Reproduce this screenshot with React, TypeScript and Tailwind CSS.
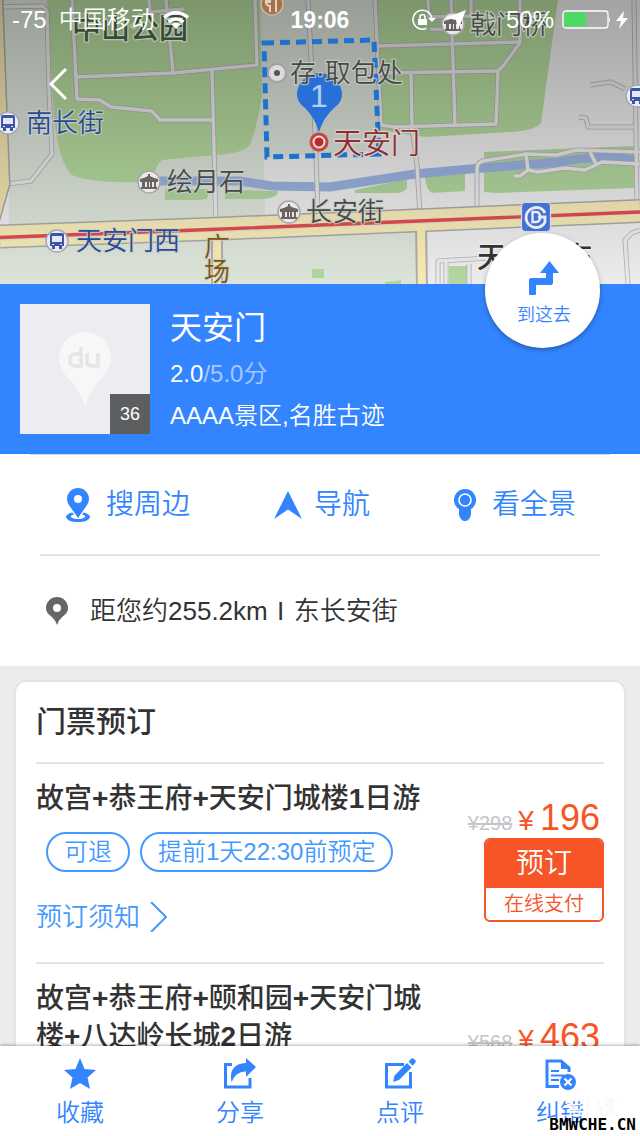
import React from "react";

const roads = [
  "M0 7 L43 6 L47 11 L49 90 L52 154 L31 181 L8 184",
  "M72 0 L77 99 L100 100 L111 107 L152 111 L160 120 L213 120",
  "M75 77 L173 73 L257 65 L255 0",
  "M149 0 L150 12 L184 9 M166 0 L173 73",
  "M212 70 L216 226",
  "M308 0 L315 130 L318 212",
  "M375 0 L381 125 L395 127 L496 124 L498 71 L503 66 L520 43 L520 0",
  "M378 46 L520 42",
  "M380 73 L498 71",
  "M411 72 L412 128 L417 165 L420 215",
  "M428 0 L429 18 M451 0 L455 124 M471 0 L471 18 M428 17 L471 16 M430 29 L452 30",
  "M477 208 L477 170 Q477 162 483 161 L526 154 L557 155 L576 150 L640 152",
  "M526 154 L528 170 L538 172 L565 168 L585 170 L602 162 L640 164 M528 170 L520 176 L514 176 M590 152 L596 164",
  "M634 0 L637 205",
  "M590 85 L611 82 L625 89 M579 117 L586 118 L588 127 L634 127",
  "M640 230 L632 233 L625 240 L628 284",
  "M438 284 L438 261 L490 258 M446 261 L446 284 M469 264 L469 284",
];

const shrubs = [
  "M165 189 H208 V197 Q206 200 200 200 H165 Z",
  "M225 190 L278 191 Q278 198 262 199 H225 Z",
  "M355 190 L407 179 V188 Q404 193 395 193 H355 Z",
  "M425 177 L465 174 V191 L432 193 Q426 190 425 177 Z",
  "M449 266 H467 V284 H449 Z",
  "M312 269 H324 V278 H312 Z",
  "M385 282 L401 280 V284 H385 Z",
];

function MuseumMark({ x, y }: { x: number; y: number }) {
  return (
    <g transform={`translate(${x} ${y})`}>
      <circle r="11" fill="#e9e9e9" stroke="#a6a6a6" strokeWidth="1.5" />
      <path d="M-1-8 H1 V-6 Q4-4 9-3 V0 H-9 V-3 Q-4-4-1-6 Z M-7 0 H-4 V5 H-7 Z M-2 0 H0 V5 H-2 Z M1 0 H3 V5 H1 Z M5 0 H7 V5 H5 Z M-8 5 H8 V7 H-8 Z" fill="#6b6262" />
    </g>
  );
}

function BusMark({ x, y }: { x: number; y: number }) {
  return (
    <g transform={`translate(${x} ${y})`}>
      <circle r="11" fill="#ececf4" stroke="#a3a8b8" strokeWidth="1.5" />
      <path d="M-5-8 H5 Q7-8 7-6 V5 H5 V8 H2 V5 H-2 V8 H-5 V5 H-7 V-6 Q-7-8-5-8 Z" fill="#3c55a5" />
      <path d="M-5-5 H5 V1 H-5 Z M-5 3 H-3 V4 H-5 Z M3 3 H5 V4 H3 Z" fill="#e6e8f4" />
    </g>
  );
}

function MapView() {
  return (
    <svg viewBox="0 0 640 284" preserveAspectRatio="xMidYMid slice" className="block h-[284px] w-full" role="img" aria-label="地图">
      <defs>
        <linearGradient id="shade" x1="0" y1="0" x2="0" y2="1">
          <stop offset="0" stopColor="#000" stopOpacity="0.32" />
          <stop offset="1" stopColor="#000" stopOpacity="0.01" />
        </linearGradient>
      </defs>
      <rect width="640" height="284" fill="#efefef" />
      <path d="M0 0 H262 L265 225 L0 228 Z M262 0 H372 L380 150 L264 158 Z M0 236 L418 228 V284 H0 Z" fill="#dfe7dc" />
      <path d="M0 205 L9 188 L9 228 H0 Z" fill="#efefef" />
      <path d="M47 0 H260 L262 95 Q257 128 250 145 Q242 153 225 154 L162 160 Q156 164 152 182 Q88 184 70 174 Q55 152 53 100 Z" fill="#b7dc9f" />
      <path d="M374 0 H558 L541 123 Q534 131 510 132 L425 137 L381 130 Z" fill="#b7dc9f" />
      <path d="M484 152 L634 146 V188 L495 193 L484 192 Z" fill="#b4d9a0" />
      {shrubs.map((d) => (
        <path key={d} d={d} fill="#b4d9a0" />
      ))}
      <path d="M160 181 H240 L272 186 L330 187 L415 174 L470 169 L560 162 Q598 154 636 160" fill="none" stroke="#9bb4e2" strokeWidth="9" />
      <g fill="none" strokeLinejoin="round">
        {roads.map((d) => (
          <path key={d} d={d} stroke="#b4b4b4" strokeWidth="5" />
        ))}
        {roads.map((d) => (
          <path key={d} d={d} stroke="#ececee" strokeWidth="3.4" />
        ))}
        <path d="M-3 0 L4 184 L-8 226" stroke="#a9a9a9" strokeWidth="13" />
        <path d="M-3 0 L4 184 L-8 226" stroke="#f3e6b0" strokeWidth="10" />
        <path d="M217 232 V290 M421 222 L422 290" stroke="#b0b0b0" strokeWidth="12" />
        <path d="M0 236.500 L210 229 L640 211" stroke="#ababab" strokeWidth="24" />
        <path d="M0 236.500 L210 229 L640 211" stroke="#f8ecbb" strokeWidth="21" />
        <path d="M217 232 V290 M421 222 L422 290" stroke="#fbedb5" strokeWidth="8" />
        <path d="M0 238 L210 230 L640 212" stroke="#e8e3cd" strokeWidth="5" />
        <path d="M0 237.500 L210 229.500 L640 212" stroke="#e44d4d" strokeWidth="3.400" />
      </g>
      <rect width="640" height="284" fill="url(#shade)" />
      <path d="M264 43 L374 40 L379 154 L267 157 Z" fill="none" stroke="#1c72cf" strokeWidth="5" strokeDasharray="10 6" />
      <circle cx="272" cy="4" r="11" fill="#a8714a" stroke="#c3b5aa" strokeWidth="1.500" />
      <path d="M266-4 V3 Q267 6 270 6 V12 M268-4 V3 M270-4 V3 M276-4 V12" fill="none" stroke="#ddd2c8" strokeWidth="2" />
      <MuseumMark x={149} y={182} />
      <MuseumMark x={289} y={212} />
      <MuseumMark x={453} y={24} />
      <BusMark x={8} y={123} />
      <BusMark x={57} y={241} />
      <BusMark x={637} y={96} />
      <circle cx="277" cy="73" r="9" fill="#dcdcdc" stroke="#a0a0a0" strokeWidth="2" />
      <circle cx="277" cy="73" r="3" fill="#555" />
      <path d="M319 132 Q315 118 305 108 Q297 102 297 95 A22.500 22 0 0 1 342 95 Q342 102 334 108 Q323 118 319 132 Z" fill="#296fd8" />
      <circle cx="319" cy="142" r="9.500" fill="#c84444" />
      <circle cx="319" cy="142" r="5.500" fill="#b72d2d" stroke="#eedddd" strokeWidth="2" />
      <text x="319" y="107" textAnchor="middle" fill="#b5cdf2" className="text-[32px] font-light">1</text>
      <g strokeWidth="2.500" strokeLinejoin="round" style={{ paintOrder: "stroke" }}>
        <g stroke="#c9d0c8" strokeOpacity="0.75" className="text-[26px] font-[350]">
          <g fill="#484848">
            <text x="290" y="82">存·取包处</text>
            <text x="167" y="191">绘月石</text>
            <text x="306" y="221">长安街</text>
            <text x="470" y="34">戟门桥</text>
          </g>
          <g fill="#2a4a95">
            <text x="26" y="132">南长街</text>
            <text x="76" y="250">天安门西</text>
          </g>
          <g fill="#7a5410">
            <text x="204" y="256">广</text>
            <text x="204" y="281">场</text>
          </g>
        </g>
        <text x="72" y="39" fill="#374a35" stroke="#b4c3ad" className="text-[29px] font-medium">中山公园</text>
        <text x="333" y="154" fill="#8b2f2f" stroke="#d8d0d0" className="text-[29px] font-[350]">天安门</text>
        <text x="477" y="268" fill="#333" stroke="#eeeeee" className="text-[29px] font-medium">天安门东</text>
      </g>
      <g transform="translate(536 217)">
        <rect x="-14.500" y="-14.500" width="29" height="29" rx="4" fill="#4570d2" stroke="#d6dbe8" strokeWidth="1.200" />
        <path d="M9-4 A10 10 0 1 0 9 5 V0 H2" fill="none" stroke="#e6ebf6" strokeWidth="2.800" />
        <path d="M-3.500-5 H0 Q4-5 4-1 V1 Q4 5 0 5 H-3.500 Z" fill="none" stroke="#e6ebf6" strokeWidth="2.400" />
      </g>
    </svg>
  );
}

function StatusBar() {
  return (
    <div className="absolute inset-x-0 top-0 grid h-10 grid-cols-[1fr_auto_1fr] items-center px-3 text-2xl leading-10 text-white">
      <div className="flex items-center font-[350]">
        <span>-75</span>
        <span className="ml-3">中国移动</span>
        <svg viewBox="0 0 26 18" className="ml-2 h-[18px] w-[26px]" fill="none" stroke="#fff" strokeWidth="3.400">
          <path d="M1 6.500 Q13-3 25 6.500 M5.500 11 Q13 5 20.500 11" />
          <path d="M8.500 13.500 Q13 10 17.500 13.500 L13 18 Z" fill="#fff" stroke="none" />
        </svg>
      </div>
      <span className="text-[23px] font-bold">19:06</span>
      <div className="flex items-center justify-end">
        <svg viewBox="0 0 24 22" className="h-[22px] w-6" fill="none" stroke="#fff">
          <path d="M14.500 19.300 A9.500 9.500 0 1 1 19.800 9" strokeWidth="1.500" />
          <path d="M16 9 H24 L20 13 Z" fill="#fff" stroke="none" />
          <path d="M6 10 H15 V16 H6 Z" fill="#fff" stroke="none" />
          <path d="M8 10 V8 Q8 5.500 10.500 5.500 Q13 5.500 13 8 V10" strokeWidth="1.600" />
        </svg>
        <svg viewBox="0 0 20 20" className="ml-[10px] h-5 w-5" fill="#fff">
          <path d="M20 0 L12 20 L10 10 L0 8 Z" />
        </svg>
        <svg viewBox="0 0 14 20" className="ml-[18px] h-5 w-[14px]" fill="#fff" fillOpacity="0.25">
          <path d="M2 2 L13 11 L2 14 Z" />
        </svg>
        <span className="ml-2">50%</span>
        <svg viewBox="0 0 48 20" className="ml-2 h-5 w-12">
          <rect x="1" y="1" width="45" height="17" rx="3" fill="none" stroke="#fff" strokeWidth="1.300" />
          <rect x="2" y="2.500" width="22" height="14" rx="1" fill="#4cd964" />
          <path d="M47 7 Q49 9.500 47 12.500 Z" fill="#fff" />
        </svg>
        <svg viewBox="0 0 12 18" className="ml-[6px] h-[18px] w-3" fill="#fff">
          <path d="M8 0 L0 10 H5 L3 18 L12 7 H7 Z" />
        </svg>
      </div>
    </div>
  );
}

function Summary() {
  return (
    <section className="relative flex gap-5 bg-[#3385ff] px-5 pt-5 pb-[18px] text-white">
      <div className="relative flex size-[130px] shrink-0 items-center justify-center bg-[#ecedf1]">
        <svg viewBox="0 0 52 74" className="h-[74px] w-[52px]" aria-hidden="true">
          <path d="M26 74 Q20 56 8 45 Q0 36 0 26 A26 26 0 0 1 52 26 Q52 36 44 45 Q32 56 26 74 Z" fill="#f7f7f7" />
          <path d="M22 15 V34 H16 Q11 34 11 29 V27 Q11 22 16 22 H22 M28 21 V29 Q28 34 33 34 H39 V21" fill="none" stroke="#e3e5e8" strokeWidth="3.600" />
        </svg>
        <span className="absolute right-0 bottom-0 size-10 bg-[#5d5e60] text-center text-lg leading-10">36</span>
      </div>
      <div className="min-w-0 text-2xl">
        <h1 className="text-[32px] leading-[48px] font-normal">天安门</h1>
        <p className="leading-[44px] font-[350]">
          2.0<span className="text-[#a5c9ff]">/5.0分</span>
        </p>
        <p className="leading-[40px] font-[350]">AAAA景区,名胜古迹</p>
      </div>
      <button className="absolute -top-[51px] right-10 flex size-[115px] flex-col items-center rounded-full bg-white pt-7 pl-[3px] text-[#3385ff] shadow-[0_2px_5px_rgba(0,0,0,0.3)]">
        <svg viewBox="0 0 30 34" className="h-[34px] w-[30px]" fill="currentColor" aria-hidden="true">
          <path d="M20.500 0 L30 12 H24 V22 Q24 24 22 24 H7 V33 Q7 34 6 34 H1 Q0 34 0 33 V19 Q0 17 2 17 H17 V12 H11 Z" />
        </svg>
        <span className="mt-[6px] text-lg leading-7 font-[350]">到这去</span>
      </button>
    </section>
  );
}

const actions = [
  {
    label: "搜周边",
    icon: (
      <svg viewBox="0 0 24 34" className="h-[34px] w-6" fill="currentColor" aria-hidden="true">
        <path fillRule="evenodd" d="M12 30 L4 18.500 Q1 15 1 11 A11 11 0 0 1 23 11 Q23 15 20 18.500 Z M12 7 A4 4 0 1 0 12 15 A4 4 0 1 0 12 7 Z" />
        <path fillRule="evenodd" d="M6.500 24.500 Q0 26 0 29 Q1 34 12 34 Q23 34 24 29 Q24 26 17.500 24.500 L16 26.500 Q20 27.500 19 29 Q17 31 12 31 Q7 31 5 29 Q4 27.500 8 26.500 Z" />
      </svg>
    ),
  },
  {
    label: "导航",
    icon: (
      <svg viewBox="0 0 28 28" className="h-7 w-7" fill="currentColor" aria-hidden="true">
        <path d="M14 0 L28 28 L14 18.500 L0 28 Z" />
      </svg>
    ),
  },
  {
    label: "看全景",
    icon: (
      <svg viewBox="0 0 22 32" className="h-8 w-[22px]" fill="currentColor" aria-hidden="true">
        <circle cx="11" cy="11" r="11" />
        <path d="M5 20 H17 V26 Q15 32 11 32 Q7 32 5 26 Z" />
        <circle cx="11" cy="11" r="6" fill="none" stroke="#fff" strokeWidth="1.600" />
      </svg>
    ),
  },
];

// Latin characters are bold while the Chinese ones stay at medium weight.
function MixedTitle({ text }: { text: string }) {
  return (
    <h3 className="text-[28px] leading-[38px] font-medium">
      {text.split(/([+\d]+)/).map((part, i) =>
        i % 2 ? (
          <span key={i} className="font-bold">{part}</span>
        ) : (
          part
        ),
      )}
    </h3>
  );
}

const tickets = [
  { title: "故宫+恭王府+天安门城楼1日游", oldPrice: "298", price: "196" },
  { title: "故宫+恭王府+颐和园+天安门城楼+八达岭长城2日游", oldPrice: "568", price: "463" },
];

function Ticket({ title, oldPrice, price }: { title: string; oldPrice: string; price: string }) {
  return (
    <li className="flex items-center gap-7 border-t-2 border-[#e4e4e4] py-4">
      <div className="min-w-0 flex-1">
        <MixedTitle text={title} />
        <div className="mt-[14px] ml-[10px] flex gap-[10px] text-2xl leading-9 font-[350] text-[#4499ff]">
          <span className="rounded-full border-2 border-[#4499ff] px-4 whitespace-nowrap">可退</span>
          <span className="rounded-full border-2 border-[#4499ff] px-4 whitespace-nowrap">提前1天22:30前预定</span>
        </div>
        <a href="#notice" className="mt-4 flex h-[58px] items-center gap-[10px] text-[26px] font-[350] text-[#4499ff]">
          预订须知
          <svg viewBox="0 0 17 30" className="h-[30px] w-[17px]" fill="none" stroke="currentColor" strokeWidth="2" aria-hidden="true">
            <path d="M1 0 L16 15 L1 30" />
          </svg>
        </a>
      </div>
      <div className="flex shrink-0 flex-col items-end">
        <div className="flex h-[34px] items-baseline pr-1 text-[#f75427]">
          <s className="text-xl leading-7 text-[#c3c5c9]">¥{oldPrice}</s>
          <span className="ml-[6px] text-[28px] leading-7">¥</span>
          <span className="ml-[6px] text-4xl leading-7">{price}</span>
        </div>
        <button className="w-[120px] overflow-hidden rounded-md border-2 border-[#f75427] bg-white font-[350]">
          <span className="block bg-[#f75427] text-[28px] leading-[48px] text-white">预订</span>
          <span className="block text-xl leading-8 text-[#f75427]">在线支付</span>
        </button>
      </div>
    </li>
  );
}

const tabs = [
  { label: "收藏", icon: <path d="M16 0 L20.500 11 L32 12 L23.500 19.500 L26 31 L16 25 L6 31 L8.500 19.500 L0 12 L11.500 11 Z" fill="currentColor" /> },
  {
    label: "分享",
    icon: (
      <>
        <path d="M8 6.500 H1.500 V29 H26 V20" fill="none" stroke="currentColor" strokeWidth="3" />
        <path d="M22 0 L32 9 L22 19 V13.500 Q12 13 7.500 24 Q4 6 22 5 Z" fill="currentColor" />
      </>
    ),
  },
  {
    label: "点评",
    icon: (
      <>
        <path d="M20 6.500 H2.500 V29 H26.500 V14" fill="none" stroke="currentColor" strokeWidth="3" />
        <path d="M9 24 L10.500 17.500 L23 5 L27.500 9.500 L15 22 Z M24.500 3.500 L27 1 Q28.500-0.500 30 1 L31 2 Q32.500 3.500 31 5 L28.700 7.700 Z" fill="currentColor" />
      </>
    ),
  },
  {
    label: "纠错",
    icon: (
      <>
        <path d="M15 28.500 H3 V3 H17 L25 10 V14" fill="none" stroke="currentColor" strokeWidth="3" />
        <path d="M17 2 V11 H26 Z" fill="currentColor" />
        <path d="M7 13 H15 M7 17.500 H20 M7 22 H15" stroke="currentColor" strokeWidth="2" />
        <circle cx="24" cy="24" r="8" fill="currentColor" />
        <path d="M20.500 20.500 L27.500 27.500 M27.500 20.500 L20.500 27.500" stroke="#fff" strokeWidth="2.200" />
      </>
    ),
  },
];

export default function App() {
  return (
    <div className="flex h-screen flex-col bg-[#ececec] font-['Liberation_Sans','Noto_Sans_CJK_SC',sans-serif] text-[#333]">
      <main className="min-h-0 flex-1 overflow-y-auto [scrollbar-width:none]">
        <header className="relative">
          <MapView />
          <StatusBar />
          <button aria-label="返回" className="absolute top-[68px] left-[49px] text-white">
            <svg viewBox="0 0 18 32" className="h-8 w-[18px]" fill="none" stroke="currentColor" strokeWidth="3">
              <path d="M17 1 L2 16 L17 31" />
            </svg>
          </button>
        </header>
        <Summary />
        <section className="bg-white px-10">
          <div className="-mx-[10px] h-px bg-[#d6d6d8]" />
          <div className="flex h-[99px] items-center justify-between pr-6 pl-[26px]">
            {actions.map((a) => (
              <button key={a.label} className="flex items-center gap-4 text-[28px] leading-10 font-[350] text-[#3385ff] nth-2:gap-3">
                {a.icon}
                {a.label}
              </button>
            ))}
          </div>
          <div className="flex h-28 items-center border-t-2 border-[#e4e4e8] pl-[6px] text-[26px] font-[350]">
            <svg viewBox="0 0 22 28" className="h-7 w-[22px]" fill="#666" aria-hidden="true">
              <path fillRule="evenodd" d="M11 28 Q9 22 3.500 18 Q0 15 0 11 A11 11 0 0 1 22 11 Q22 15 18.500 18 Q13 22 11 28 Z M11 7 A4 4 0 1 0 11 15 A4 4 0 1 0 11 7 Z" />
            </svg>
            <p className="ml-[22px]">
              距您约255.2km<span className="inline-block w-[26px] text-center">I</span>东长安街
            </p>
          </div>
        </section>
        <section className="mx-[14px] mt-[14px] rounded-xl border-2 border-[#e4e4e4] bg-white px-5">
          <h2 className="text-[30px] leading-[80px] font-medium">门票预订</h2>
          <ul>
            {tickets.map((t) => (
              <Ticket key={t.title} {...t} />
            ))}
          </ul>
        </section>
      </main>
      <nav className="relative grid h-[90px] shrink-0 grid-cols-4 bg-white shadow-[0_-1px_3px_rgba(0,0,0,0.3)]">
        {tabs.map((t) => (
          <button key={t.label} className="flex flex-col items-center pt-3 text-2xl leading-9 font-[350] text-[#3385ff]">
            <svg viewBox="0 0 32 32" className="size-8" aria-hidden="true">{t.icon}</svg>
            <span className="mt-[5px]">{t.label}</span>
          </button>
        ))}
        <div className="pointer-events-none absolute right-1 bottom-1 text-right">
          <p className="pr-3 text-xl leading-5 font-light text-white [text-shadow:0_0_1px_#ddd]">宝马汇</p>
          <p className="font-['DejaVu_Sans_Mono'] text-base leading-[14px] font-bold text-black">BMWCHE.CN</p>
        </div>
      </nav>
    </div>
  );
}
